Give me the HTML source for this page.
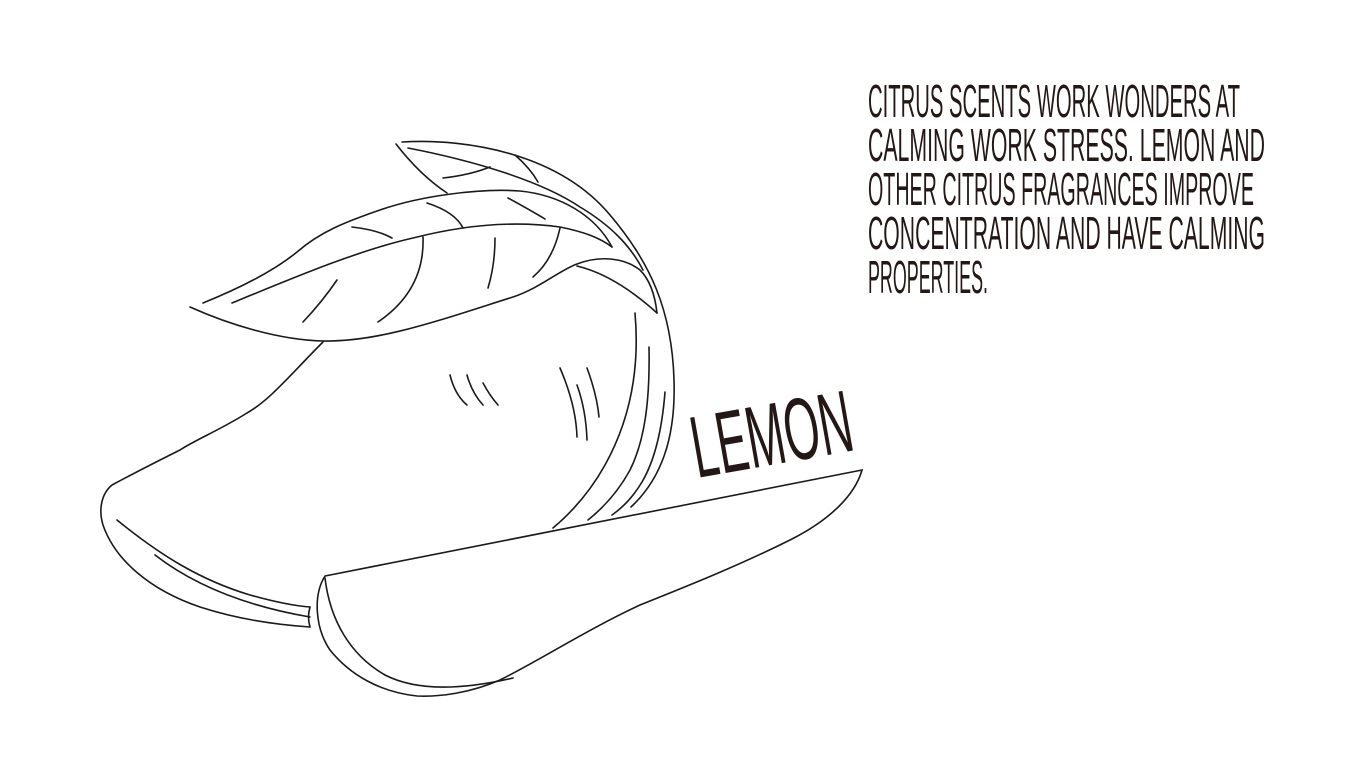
<!DOCTYPE html>
<html><head><meta charset="utf-8"><style>
html,body{margin:0;padding:0;background:#fff;}
svg{display:block}
</style></head><body>
<svg width="1366" height="768" viewBox="0 0 1366 768" xmlns="http://www.w3.org/2000/svg">
<g fill="none" stroke="#1a1a1a" stroke-width="1.6" stroke-linecap="round">
<path d="M396,144 Q420,175 447,193"/>
<path d="M402,142 C470,138 560,155 610,215 C650,262 672,310 674,380 C676,440 660,480 631,507"/>
<path d="M408,148 C470,160 540,180 580,207 C610,225 630,245 643,270"/>
<path d="M443,178 Q470,175 490,167"/>
<path d="M515,155 Q530,168 538,182"/>
<path d="M203,303 C240,288 275,270 297,252 C320,232 345,222 380,210 C420,196 480,188 520,191 C560,195 595,215 612,247"/>
<path d="M232,303 C300,275 360,250 413,238 C460,226 510,220 560,227 C585,232 600,238 612,247"/>
<path d="M190,307 C230,325 280,340 323,341 C380,342 440,320 513,297 C540,288 560,270 577,264 C600,255 625,258 640,270 C650,280 655,295 657,313"/>
<path d="M577,266 Q615,275 657,313"/>
<path d="M337,280 Q322,302 303,322"/>
<path d="M423,237 Q425,290 378,322"/>
<path d="M495,238 Q495,265 488,288"/>
<path d="M560,228 Q553,260 533,277"/>
<path d="M352,227 Q378,230 392,238"/>
<path d="M427,203 Q455,212 463,228"/>
<path d="M508,198 Q530,210 545,219"/>
<path d="M323,342 C290,375 270,400 247,413 C220,430 195,440 180,450 C150,465 125,478 112,485 C100,495 99,512 103,525 C115,560 150,590 200,607 C240,620 280,625 310,627"/>
<path d="M117,520 C160,555 200,580 250,595 C275,602 295,606 310,607"/>
<path d="M155,555 C190,582 240,605 310,617"/>
<path d="M310,607 Q307,617 310,627"/>
<path d="M450,375 Q455,395 467,405"/>
<path d="M467,375 Q472,393 483,405"/>
<path d="M483,383 Q490,396 498,405"/>
<path d="M560,368 Q576,405 577,437"/>
<path d="M577,385 Q586,410 587,440"/>
<path d="M587,368 Q597,395 599,417"/>
<path d="M635,313 C640,370 630,420 605,465 C590,492 572,512 553,528"/>
<path d="M649,347 C650,400 645,440 630,470 C618,492 603,508 588,520"/>
<path d="M665,392 C662,430 655,460 642,482 C633,497 622,508 612,515"/>
<path d="M325,576 L862,470 C855,495 830,520 790,540 C740,565 690,585 640,605 C590,628 540,660 500,680 C470,693 440,697 417,696 C380,692 350,675 330,650 C315,628 313,595 325,576 Z" fill="#fff"/>
<path d="M325,578 C330,620 350,655 385,675 C420,693 470,688 513,678"/>
</g>
<g fill="#231815" font-family="'Liberation Sans Narrow','Liberation Sans',sans-serif">
<text x="0" y="0" font-size="88" textLength="162" lengthAdjust="spacingAndGlyphs" transform="translate(697,478) rotate(-10)">LEMON</text>
<g font-size="46">
<text x="868" y="117" textLength="372" lengthAdjust="spacingAndGlyphs">CITRUS SCENTS WORK WONDERS AT</text>
<text x="868" y="161" textLength="397" lengthAdjust="spacingAndGlyphs">CALMING WORK STRESS. LEMON AND</text>
<text x="868" y="205" textLength="386" lengthAdjust="spacingAndGlyphs">OTHER CITRUS FRAGRANCES IMPROVE</text>
<text x="868" y="249" textLength="397" lengthAdjust="spacingAndGlyphs">CONCENTRATION AND HAVE CALMING</text>
<text x="868" y="293" textLength="120" lengthAdjust="spacingAndGlyphs">PROPERTIES.</text>
</g>
</g>
</svg>
</body></html>
